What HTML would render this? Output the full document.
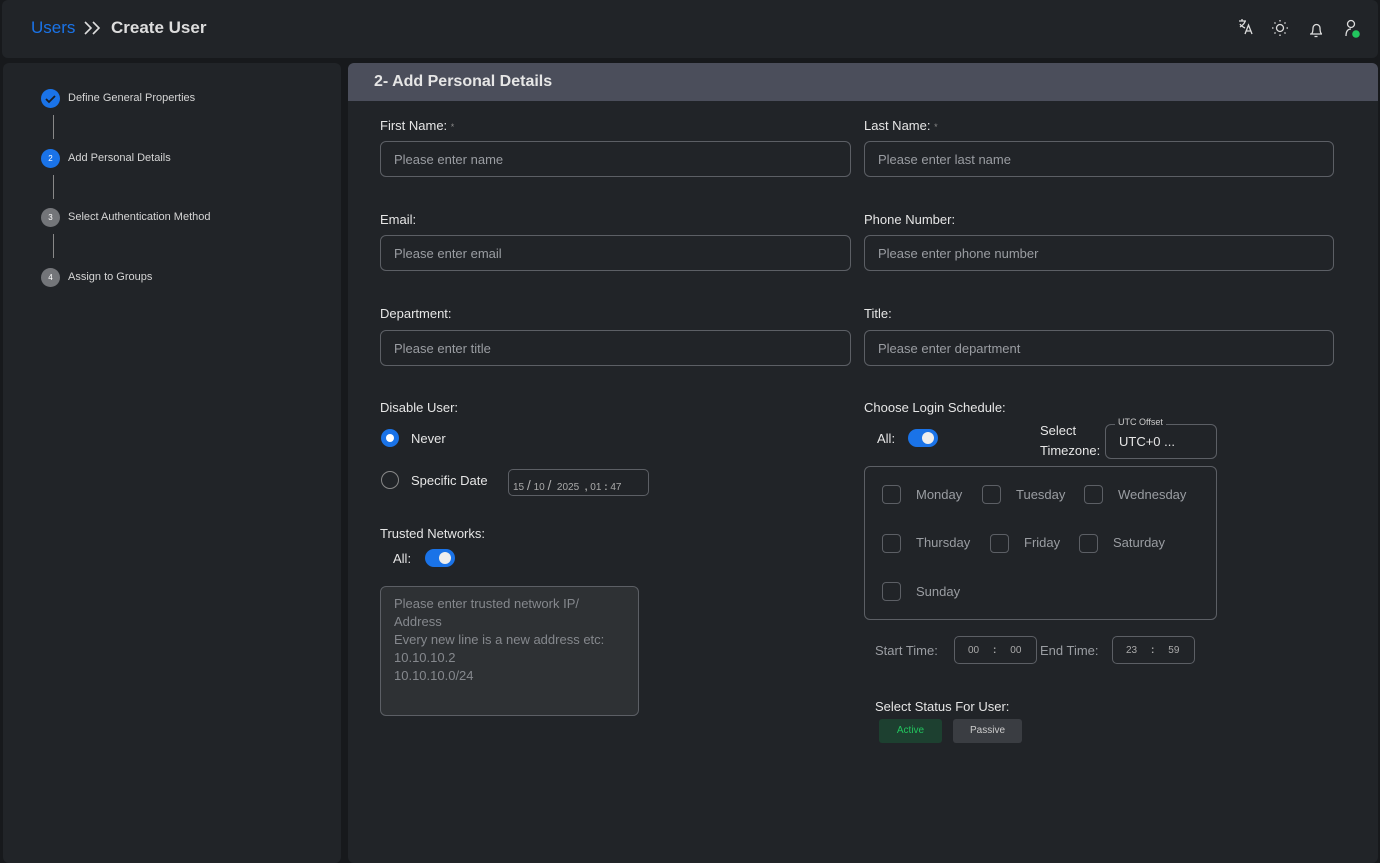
<!DOCTYPE html>
<html><head><style>
*{box-sizing:border-box;margin:0;padding:0}
body{width:1380px;height:853px;background:#17191c;font-family:"Liberation Sans",sans-serif;color:#e3e3e3;position:relative;overflow:hidden}
.a{position:absolute}
.panel{background:#212428;border-radius:6px}
.lbl{font-size:13px;color:#e6e6e6}
.inp{position:absolute;height:36px;border:1px solid #5c5f65;border-radius:6px;font-size:13px;color:#9a9da2;padding:10px 13px}
.step{position:absolute;left:41px;font-size:11px;color:#d5d5d5}
.dot{position:absolute;left:0;top:-3px;width:19px;height:19px;border-radius:50%;font-size:8px;color:#fff;text-align:center;line-height:19px}
.step span{position:absolute;left:27px;white-space:nowrap}
.vl{position:absolute;left:53px;width:1px;height:24px;background:#888}
.cb{position:absolute;width:19px;height:19px;border:1px solid #5c5f65;border-radius:4px}
.day{position:absolute;font-size:13px;color:#9a9da2}
.tog{position:absolute;width:30px;height:18px;border-radius:9px;background:#1a73e8}
.tog:after{content:"";position:absolute;right:4px;top:3px;width:12px;height:12px;border-radius:50%;background:#eee}
</style></head><body>
<div class="a panel" style="left:2px;top:0;width:1376px;height:58px"></div>
<div class="a" style="left:31px;top:18px;font-size:17px;color:#1a73e8">Users</div>
<svg class="a" style="left:83px;top:20px" width="20" height="16" fill="none" stroke="#ddd" stroke-width="1.6"><path d="M2 2l6 6-6 6M10 2l6 6-6 6"/></svg>
<div class="a" style="left:111px;top:18px;font-size:17px;color:#ddd;font-weight:600">Create User</div>
<svg class="a" style="left:1236px;top:16px" width="130" height="26" viewBox="0 0 130 26" fill="none" stroke="#ddd" stroke-width="1.3">
<path d="M3 5h7M6 3v2M4 8c1 2 3 3 5 4M9 5c0 2-2 4-5 6M9 18l3.5-9 3.5 9M10.5 15h4"/>
<circle cx="44" cy="12" r="3.5"/><path d="M44 4v1.5M44 18.5v1.5M36 12h1.5M50.5 12h1.5M38.5 6.5l1 1M48.5 16.5l1 1M38.5 17.5l1-1M48.5 7.5l1-1"/>
<path d="M74 18h12M75.5 18c1-1 1.5-2 1.5-6a3.5 3.5 0 017 0c0 4 .5 5 1.5 6M78.5 20.5h3"/>
<circle cx="115" cy="8" r="3.5"/><path d="M110 20c0-5 2-7 5-7"/>
<circle cx="120" cy="18" r="3.8" fill="#22c55e" stroke="none"/>
</svg>
<div class="a panel" style="left:3px;top:63px;width:338px;height:800px"></div>
<div class="step" style="top:92px"><div class="dot" style="background:#1a73e8"><svg width="19" height="19"><path d="M5 10l3 3 6-6" stroke="#1a1d21" stroke-width="1.8" fill="none"/></svg></div><span>Define General Properties</span></div>
<div class="vl" style="top:115px"></div>
<div class="step" style="top:152px"><div class="dot" style="background:#1a73e8">2</div><span>Add Personal Details</span></div>
<div class="vl" style="top:175px"></div>
<div class="step" style="top:211px"><div class="dot" style="background:#737579">3</div><span>Select Authentication Method</span></div>
<div class="vl" style="top:234px"></div>
<div class="step" style="top:271px"><div class="dot" style="background:#737579">4</div><span>Assign to Groups</span></div>

<div class="a panel" style="left:348px;top:63px;width:1030px;height:800px;overflow:hidden"><div style="height:38px;background:#4b4e5b;font-size:16px;color:#e6e6e6;padding:10px 0 0 26px;font-weight:600">2- Add Personal Details</div></div>

<div class="a lbl" style="left:380px;top:118px">First Name: <span style="color:#888;font-size:9px">*</span></div>
<div class="a lbl" style="left:864px;top:118px">Last Name: <span style="color:#888;font-size:9px">*</span></div>
<div class="inp" style="left:380px;top:141px;width:471px">Please enter name</div>
<div class="inp" style="left:864px;top:141px;width:470px">Please enter last name</div>
<div class="a lbl" style="left:380px;top:212px">Email:</div>
<div class="a lbl" style="left:864px;top:212px">Phone Number:</div>
<div class="inp" style="left:380px;top:235px;width:471px">Please enter email</div>
<div class="inp" style="left:864px;top:235px;width:470px">Please enter phone number</div>
<div class="a lbl" style="left:380px;top:306px">Department:</div>
<div class="a lbl" style="left:864px;top:306px">Title:</div>
<div class="inp" style="left:380px;top:330px;width:471px">Please enter title</div>
<div class="inp" style="left:864px;top:330px;width:470px">Please enter department</div>

<div class="a lbl" style="left:380px;top:400px">Disable User:</div>
<div class="a" style="left:381px;top:429px;width:18px;height:18px;border-radius:50%;background:#1a73e8"><div style="margin:5px;width:8px;height:8px;border-radius:50%;background:#fff"></div></div>
<div class="a lbl" style="left:411px;top:431px">Never</div>
<div class="a" style="left:381px;top:471px;width:18px;height:18px;border-radius:50%;border:1px solid #888"></div>
<div class="a lbl" style="left:411px;top:473px">Specific Date</div>
<div class="a" style="left:508px;top:469px;width:141px;height:27px;border:1px solid #5c5f65;border-radius:5px;font-size:10px;color:#aaa;padding:7px 4px;white-space:nowrap">15 <span style="font-size:14px">/</span> 10 <span style="font-size:14px">/</span> &nbsp;2025 &nbsp;<b>,</b> 01 <b>:</b> 47</div>
<div class="a lbl" style="left:380px;top:526px">Trusted Networks:</div>
<div class="a lbl" style="left:393px;top:551px">All:</div>
<div class="tog" style="left:425px;top:549px"></div>
<div class="a" style="left:380px;top:586px;width:259px;height:130px;border:1px solid #5c5f65;border-radius:6px;background:#2e3134;font-size:13px;line-height:18px;color:#85888d;padding:8px 13px">Please enter trusted network IP/<br>Address<br>Every new line is a new address etc:<br>10.10.10.2<br>10.10.10.0/24</div>

<div class="a lbl" style="left:864px;top:400px">Choose Login Schedule:</div>
<div class="a lbl" style="left:877px;top:431px">All:</div>
<div class="tog" style="left:908px;top:429px"></div>
<div class="a lbl" style="left:1040px;top:421px;line-height:20px">Select<br>Timezone:</div>
<div class="a" style="left:1105px;top:424px;width:112px;height:35px;border:1px solid #5c5f65;border-radius:6px;font-size:13px;color:#e6e6e6;padding:9px 13px">UTC+0 ...</div>
<div class="a" style="left:1115px;top:417px;background:#212428;font-size:9px;color:#ccc;padding:0 3px">UTC Offset</div>
<div class="a" style="left:864px;top:466px;width:353px;height:154px;border:1px solid #5c5f65;border-radius:6px"></div>
<div class="cb" style="left:882px;top:485px"></div><div class="day" style="left:916px;top:487px">Monday</div>
<div class="cb" style="left:982px;top:485px"></div><div class="day" style="left:1016px;top:487px">Tuesday</div>
<div class="cb" style="left:1084px;top:485px"></div><div class="day" style="left:1118px;top:487px">Wednesday</div>
<div class="cb" style="left:882px;top:534px"></div><div class="day" style="left:916px;top:535px">Thursday</div>
<div class="cb" style="left:990px;top:534px"></div><div class="day" style="left:1024px;top:535px">Friday</div>
<div class="cb" style="left:1079px;top:534px"></div><div class="day" style="left:1113px;top:535px">Saturday</div>
<div class="cb" style="left:882px;top:582px"></div><div class="day" style="left:916px;top:584px">Sunday</div>
<div class="day" style="left:875px;top:643px">Start Time:</div>
<div class="a" style="left:954px;top:636px;width:83px;height:28px;border:1px solid #5c5f65;border-radius:5px;font-size:10px;color:#aaa;padding:8px 0 0 13px;white-space:nowrap">00 &nbsp;&nbsp;&nbsp;&nbsp;<b>:</b>&nbsp;&nbsp;&nbsp;&nbsp; 00</div>
<div class="day" style="left:1040px;top:643px">End Time:</div>
<div class="a" style="left:1112px;top:636px;width:83px;height:28px;border:1px solid #5c5f65;border-radius:5px;font-size:10px;color:#aaa;padding:8px 0 0 13px;white-space:nowrap">23 &nbsp;&nbsp;&nbsp;&nbsp;<b>:</b>&nbsp;&nbsp;&nbsp;&nbsp; 59</div>
<div class="a lbl" style="left:875px;top:699px">Select Status For User:</div>
<div class="a" style="left:879px;top:719px;width:63px;height:24px;border-radius:3px;background:#1d4030;color:#22c55e;font-size:10px;text-align:center;line-height:24px">Active</div>
<div class="a" style="left:953px;top:719px;width:69px;height:24px;border-radius:3px;background:#3a3d42;color:#ccc;font-size:10px;text-align:center;line-height:24px">Passive</div>
</body></html>
